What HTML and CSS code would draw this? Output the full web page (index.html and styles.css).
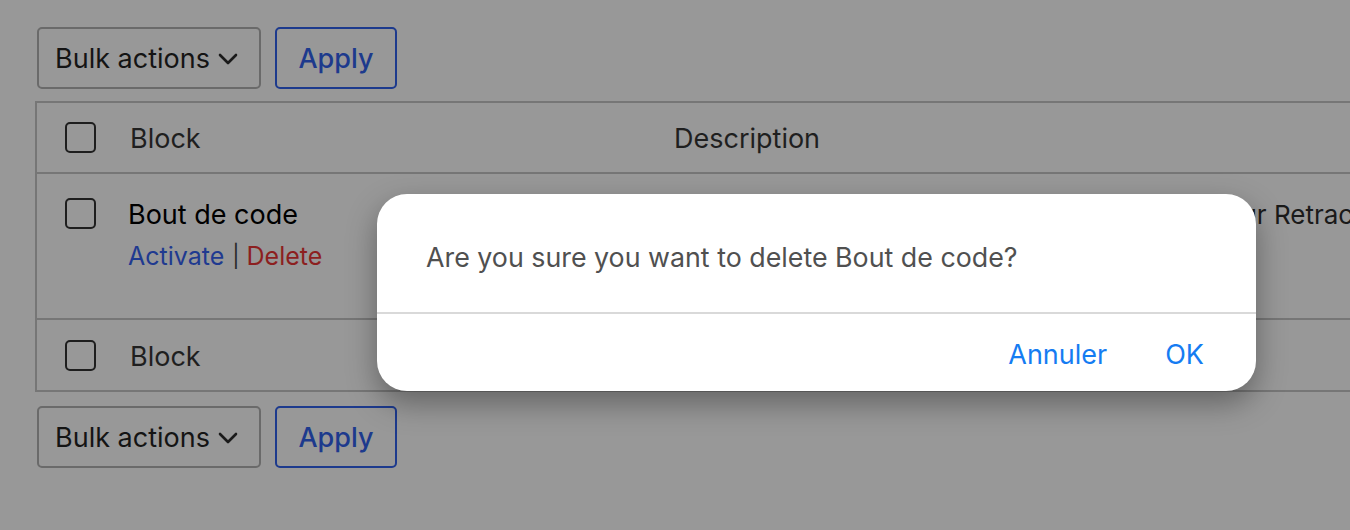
FILE: index.html
```html
<!DOCTYPE html>
<html lang="en">
<head>
<meta charset="utf-8">
<title>Blocks</title>
<link rel="stylesheet" href="styles.css">
</head>
<body>
<div class="page">
  <div class="actions">
    <div class="select">Bulk actions<svg class="chev" viewBox="0 0 20 12" width="20" height="12"><path d="M2 2 L10 10 L18 2" fill="none" stroke="#1a1a1a" stroke-width="2.6" stroke-linecap="round" stroke-linejoin="round"/></svg></div>
    <div class="apply">Apply</div>
  </div>
  <div class="table">
    <div class="row head">
      <div class="cb-col"><span class="cb"></span></div>
      <div class="name-col">Block</div>
      <div class="desc-col">Description</div>
    </div>
    <div class="row item">
      <div class="cb-col"><span class="cb"></span></div>
      <div class="name-col">
        <div class="title">Bout de code</div>
        <div class="links"><span class="act">Activate</span><span class="sep">|</span><span class="del">Delete</span></div>
      </div>
      <div class="desc-col desc-text">Insère un bloc de code personnalisé conçu pour Retracer les modifications</div>
    </div>
    <div class="row head foot">
      <div class="cb-col"><span class="cb"></span></div>
      <div class="name-col">Block</div>
      <div class="desc-col"></div>
    </div>
  </div>
  <div class="actions bottom">
    <div class="select">Bulk actions<svg class="chev" viewBox="0 0 20 12" width="20" height="12"><path d="M2 2 L10 10 L18 2" fill="none" stroke="#1a1a1a" stroke-width="2.6" stroke-linecap="round" stroke-linejoin="round"/></svg></div>
    <div class="apply">Apply</div>
  </div>
</div>
<div class="dialog">
  <div class="msg">Are you sure you want to delete Bout de code?</div>
  <div class="btns">
    <span class="btn">Annuler</span>
    <span class="btn">OK</span>
  </div>
</div>
</body>
</html>
```
FILE: styles.css
```css
html, body {
  margin: 0;
  padding: 0;
  background: #989898;
  overflow: hidden;
}
body {
  font-family: Inter, "Noto Sans", "Liberation Sans", sans-serif;
  width: 1350px;
  height: 530px;
  position: relative;
}
.page {
  padding: 27px 0 0 35px;
}
.actions {
  display: flex;
  gap: 14px;
  margin-left: 2px;
}
.actions.bottom {
  margin-top: 14px;
}
.select {
  box-sizing: border-box;
  width: 224px;
  height: 62px;
  border: 2px solid #6a6a6a;
  border-radius: 5px;
  display: flex;
  align-items: center;
  padding-left: 16px;
  font-size: 27px;
  color: #141414;
  gap: 8px;
}
.chev {
  margin-top: 2px;
}
.apply {
  box-sizing: border-box;
  width: 122px;
  height: 62px;
  border: 2px solid #1d3a8d;
  border-radius: 5px;
  display: flex;
  align-items: center;
  justify-content: center;
  font-size: 27px;
  font-weight: 500;
  color: #1d3a8d;
}
.table {
  margin-top: 12px;
  width: 1400px;
  border: 2px solid #767676;
  border-right: none;
  overflow: hidden;
}
.row {
  display: flex;
  box-sizing: border-box;
}
.head {
  height: 71px;
  align-items: center;
  border-bottom: 2px solid #767676;
}
.foot {
  border-bottom: none;
  height: 70px;
}
.item {
  height: 146px;
  align-items: flex-start;
  border-bottom: 2px solid #767676;
}
.cb-col {
  flex-shrink: 0;
  width: 93px;
  padding-left: 28px;
  box-sizing: border-box;
  display: flex;
}
.cb {
  box-sizing: border-box;
  width: 31px;
  height: 31px;
  border: 2px solid #1e1e1e;
  border-radius: 5px;
  display: block;
}
.name-col {
  flex-shrink: 0;
}
.desc-col {
  flex: 1;
  min-width: 0;
}
.head .name-col {
  width: 544px;
  font-size: 27px;
  color: #1f1f1f;
  padding-top: 2px;
}
.head .desc-col {
  font-size: 27px;
  color: #1f1f1f;
  padding-top: 2px;
}
.item .cb-col {
  padding-top: 24px;
}
.item .name-col {
  width: 544px;
  padding-top: 24px;
  margin-left: -2px;
  margin-right: 2px;
}
.title {
  font-size: 27px;
  color: #000;
  line-height: 33px;
}
.links {
  margin-top: 9px;
  font-size: 25px;
  line-height: 32px;
  color: #333;
  display: flex;
  align-items: center;
}
.act { color: #1f3a90; }
.del { color: #8c1f1f; }
.sep {
  color: #2a2a2a;
  margin: 0 7px 0 8px;
  font-size: 22px;
}
.desc-text {
  padding-top: 24px;
  font-size: 26px;
  line-height: 33px;
  color: #1a1a1a;
  white-space: nowrap;
  overflow: hidden;
}
.dialog {
  position: absolute;
  left: 377px;
  top: 194px;
  width: 879px;
  height: 197px;
  background: #fff;
  border-radius: 30px;
  box-shadow: 0 12px 30px rgba(0, 0, 0, 0.35);
  display: flex;
  flex-direction: column;
  font-family: Inter, "Liberation Sans", sans-serif;
}
.msg {
  height: 120px;
  box-sizing: border-box;
  padding: 47px 0 0 49px;
  font-size: 26.8px;
  line-height: 32px;
  color: #505050;
  border-bottom: 2px solid #d9d9d9;
}
.btns {
  flex: 1;
  display: flex;
  justify-content: flex-end;
  align-items: center;
  gap: 58px;
  padding-right: 52px;
  padding-top: 3px;
  font-size: 27px;
  color: #157cf2;
}
```
